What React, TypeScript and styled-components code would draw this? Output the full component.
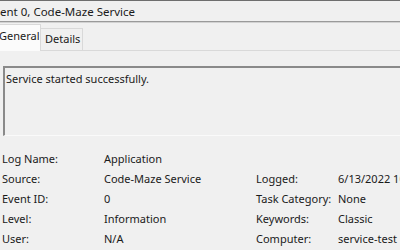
import styled, { createGlobalStyle } from "styled-components";

const GlobalStyle = createGlobalStyle`
  html, body {
    margin: 0;
    padding: 0;
    background: #f0f0f0;
    overflow: hidden;
  }
  body {
    font-family: "Noto Sans", "Open Sans", sans-serif;
    font-size: 11px;
    color: #1a1a1a;
  }
`;

type Prop = { label: string; value: string };

const leftProps: Prop[] = [
  { label: "Log Name:", value: "Application" },
  { label: "Source:", value: "Code-Maze Service" },
  { label: "Event ID:", value: "0" },
  { label: "Level:", value: "Information" },
  { label: "User:", value: "N/A" },
];

const rightProps: (Prop | null)[] = [
  null,
  { label: "Logged:", value: "6/13/2022 10:14:22 AM" },
  { label: "Task Category:", value: "None" },
  { label: "Keywords:", value: "Classic" },
  { label: "Computer:", value: "service-test" },
];

function App() {
  return (
    <Window>
      <GlobalStyle />
      <TitleBar>ent 0, Code-Maze Service</TitleBar>
      <TabStrip>
        <Tab $active>General</Tab>
        <Tab>Details</Tab>
      </TabStrip>
      <Panel>
        <MessageBox>Service started successfully.</MessageBox>
        <PropGrid>
          {leftProps.map((p, i) => (
            <Row key={p.label}>
              <Cell>{p.label}</Cell>
              <Cell>{p.value}</Cell>
              <Cell>{rightProps[i]?.label}</Cell>
              <Cell>{rightProps[i]?.value}</Cell>
            </Row>
          ))}
        </PropGrid>
      </Panel>
    </Window>
  );
}

export default App;

const Window = styled.div`
  width: 400px;
  height: 250px;
  overflow: hidden;
  display: flex;
  flex-direction: column;
  background: #f0f0f0;
`;

const TitleBar = styled.div`
  height: 20px;
  line-height: 22px;
  font-size: 11.5px;
  border-top: 1px solid #6e6e6e;
  border-bottom: 1px solid #9a9a9a;
  box-shadow: 0 1px 0 #d2d2d2;
  white-space: nowrap;
`;

const TabStrip = styled.div`
  display: flex;
  align-items: flex-end;
  height: 27px;
  margin-top: 1px;
  border-bottom: 1px solid #d9d9d9;
  margin-left: -5px;
`;

const Tab = styled.div<{ $active?: boolean }>`
  box-sizing: border-box;
  height: ${(p) => (p.$active ? "27px" : "22px")};
  width: ${(p) => (p.$active ? "46px" : "42px")};
  padding: ${(p) => (p.$active ? "0 0 0 3px" : "0 0 0 4px")};
  line-height: ${(p) => (p.$active ? "22px" : "20px")};
  background: ${(p) => (p.$active ? "#fbfbfb" : "#f0f0f0")};
  border: 1px solid #d9d9d9;
  border-bottom: none;
  ${(p) => (p.$active ? "" : "border-left: none;")}
  margin-bottom: ${(p) => (p.$active ? "-1px" : "0")};
  white-space: nowrap;
`;

const Panel = styled.div`
  display: flex;
  flex-direction: column;
  padding: 15px 0 0 3px;
`;

const MessageBox = styled.div`
  box-sizing: border-box;
  width: 420px;
  height: 70px;
  border-top: 2px solid #8a8a8a;
  border-left: 2px solid #8a8a8a;
  border-bottom: 1px solid #fafafa;
  padding: 3px 0 0 1px;
  line-height: 16px;
`;

const PropGrid = styled.div`
  display: flex;
  flex-direction: column;
  margin: 13px 0 0 -1px;
`;

const Row = styled.div`
  display: grid;
  grid-template-columns: 102px 152px 82px 1fr;
  height: 20px;
  line-height: 20px;
  white-space: nowrap;
`;

const Cell = styled.div`
  overflow: visible;
`;
